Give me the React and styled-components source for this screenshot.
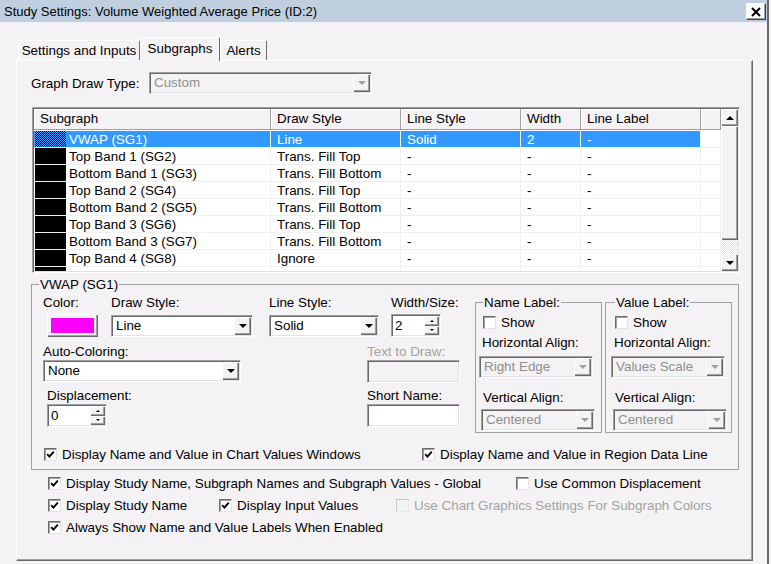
import React from 'react';
import styled, { createGlobalStyle } from 'styled-components';

const BG = '#f5f2f5';
const GRAYTEXT = '#a3a3a3';

const GlobalStyle = createGlobalStyle`
  html, body { margin: 0; padding: 0; }
  body {
    background: ${BG};
    font-family: "Liberation Sans", Arial, sans-serif;
    font-size: 13.4px;
    color: #000;
  }
  * { box-sizing: border-box; }
`;

const raised = `
  background: ${BG};
  box-shadow: inset 1px 1px #fff, inset -1px -1px #696969, inset -2px -2px #a0a0a0;
`;

const sunken = `
  border: 1px solid;
  border-color: #a0a0a0 #fff #fff #a0a0a0;
  box-shadow: inset 1px 1px #696969, inset -1px -1px #e3e3e3;
`;

const Window = styled.div`
  width: 769px;
  height: 564px;
  border-right: 2px solid #6a6a6a;
  background: ${BG};
  overflow: hidden;
  display: flex;
  flex-direction: column;
`;

const TitleBar = styled.div`
  height: 22px;
  flex-shrink: 0;
  background: #bfcfdf;
  display: flex;
  align-items: center;
  justify-content: space-between;
  padding: 0 1px 0 4px;
  font-size: 13px;
`;

const CloseBtn = styled.div`
  width: 20px;
  height: 17px;
  margin-top: 1px;
  background: #fbfbfb;
  border: 1px solid;
  border-color: #fff #404040 #404040 #fff;
  box-shadow: inset -1px -1px #a0a0a0;
  display: flex;
  align-items: center;
  justify-content: center;
`;

const Body = styled.div`
  padding: 15px 0 0 16px;
`;

const TabRow = styled.div`
  display: flex;
  align-items: flex-end;
  height: 23px;
  padding-left: 2px;
  position: relative;
  z-index: 1;
`;

const Tab = styled.div`
  width: ${p => p.$w}px;
  height: ${p => (p.$active ? 24 : 20)}px;
  margin-bottom: ${p => (p.$active ? -1 : 0)}px;
  background: ${BG};
  border: 1px solid;
  border-color: #fff #696969 transparent #fff;
  border-bottom: none;
  border-radius: 2px 2px 0 0;
  display: flex;
  align-items: center;
  justify-content: center;
  padding-bottom: ${p => (p.$active ? 2 : 0)}px;
  white-space: nowrap;
`;

const Panel = styled.div`
  width: 737px;
  height: 501px;
  border: 1px solid;
  border-color: #fff #696969 #696969 #fff;
  box-shadow: inset -1px -1px #a0a0a0;
  padding: 11px 0 0 15px;
`;

const DrawTypeRow = styled.div`
  display: flex;
  align-items: center;
  height: 22px;
`;

const DrawTypeLabel = styled.span`
  width: 118px;
  margin-left: -1px;
`;

/* ---------- generic controls ---------- */

const Arrow = styled.span`
  width: 0;
  height: 0;
  border-left: ${p => p.$s}px solid transparent;
  border-right: ${p => p.$s}px solid transparent;
  ${p => (p.$up ? 'border-bottom' : 'border-top')}: ${p => p.$s}px solid ${p => p.$c || '#000'};
`;

const ComboBox = styled.div`
  display: flex;
  height: 22px;
  width: ${p => p.$w}px;
  margin-left: ${p => p.$ml || 0}px;
  margin-top: ${p => p.$mt || 0}px;
  ${sunken}
  padding: 1px;
  background: ${p => (p.$disabled ? BG : '#fff')};
  color: ${p => (p.$disabled ? '#8f8f8f' : '#000')};
`;

const ComboText = styled.span`
  flex: 1;
  padding-left: 3px;
  line-height: 18px;
  white-space: nowrap;
  overflow: hidden;
`;

const DropBtn = styled.span`
  width: 17px;
  display: flex;
  align-items: center;
  justify-content: center;
  ${raised}
`;

const Combo = ({ value, w, ml, mt, disabled }) => (
  <ComboBox $w={w} $ml={ml} $mt={mt} $disabled={disabled}>
    <ComboText>{value}</ComboText>
    <DropBtn>
      <Arrow $s={4} $c={disabled ? '#a0a0a0' : '#000'} />
    </DropBtn>
  </ComboBox>
);

const SpinBox = styled.div`
  display: flex;
  height: 23px;
  width: ${p => p.$w}px;
  ${sunken}
  padding: 1px;
  background: #fff;
`;

const SpinText = styled.span`
  flex: 1;
  padding-left: 2px;
  line-height: 19px;
`;

const SpinBtns = styled.div`
  width: 15px;
  display: flex;
  flex-direction: column;
`;

const SpinBtn = styled.span`
  flex: 1;
  display: flex;
  align-items: center;
  justify-content: center;
  ${raised}
`;

const Spinner = ({ value, w }) => (
  <SpinBox $w={w}>
    <SpinText>{value}</SpinText>
    <SpinBtns>
      <SpinBtn><Arrow $up $s={2} /></SpinBtn>
      <SpinBtn><Arrow $s={2} /></SpinBtn>
    </SpinBtns>
  </SpinBox>
);

const EditBox = styled.div`
  height: 23px;
  width: ${p => p.$w}px;
  ${sunken}
  background: ${p => (p.$disabled ? BG : '#fff')};
`;

const CheckItem = styled.label`
  display: flex;
  align-items: center;
  gap: 5px;
  height: 16px;
  width: ${p => (p.$w ? `${p.$w}px` : 'auto')};
  margin-left: ${p => p.$ml || 0}px;
  flex-shrink: 0;
  white-space: nowrap;
  color: ${p => (p.$disabled ? GRAYTEXT : '#000')};
`;

const Box = styled.span`
  width: 13px;
  height: 13px;
  flex-shrink: 0;
  border: 1px solid;
  border-color: ${p => (p.$disabled ? '#c8c8c8 #e8e8e8 #e8e8e8 #c8c8c8' : '#6d6d6d #e3e3e3 #e3e3e3 #6d6d6d')};
  box-shadow: ${p => (p.$disabled ? 'none' : 'inset 1px 1px #a0a0a0')};
  background: ${p => (p.$disabled ? BG : '#fff')};
  display: flex;
  align-items: center;
  justify-content: center;
`;

const Check = ({ checked, disabled, children, w, ml }) => (
  <CheckItem $w={w} $ml={ml} $disabled={disabled}>
    <Box $disabled={disabled}>
      {checked && (
        <svg width="9" height="9" viewBox="0 0 9 9">
          <polyline points="1.2,4.2 3.4,6.6 7.8,1.6" fill="none" stroke="#000" strokeWidth="1.9" />
        </svg>
      )}
    </Box>
    {children}
  </CheckItem>
);

/* ---------- subgraph list ---------- */

const COLS = [237, 130, 120, 60, 120, 20];

const ListBox = styled.div`
  margin-top: 13px;
  width: 708px;
  height: 166px;
  ${sunken}
  padding: 1px;
  background: #fff;
  display: flex;
  overflow: hidden;
`;

const Grid = styled.div`
  width: 687px;
  overflow: hidden;
`;

const HeaderRow = styled.div`
  display: flex;
  height: 21px;
  margin-bottom: 1px;
`;

const HeaderCell = styled.div`
  width: ${p => p.$w}px;
  flex-shrink: 0;
  background: ${BG};
  border-right: 1px solid #a0a0a0;
  border-bottom: 1px solid #a0a0a0;
  box-shadow: inset 1px 1px #fff;
  padding-left: 6px;
  line-height: 20px;
  white-space: nowrap;
`;

const Row = styled.div`
  display: flex;
  height: 17px;
`;

const Cell = styled.div`
  width: ${p => p.$w}px;
  flex-shrink: 0;
  height: 17px;
  display: flex;
  align-items: center;
  border-right: 1px solid #f0f0f0;
  border-bottom: 1px solid #f0f0f0;
  padding-left: ${p => (p.$first ? 1 : 6)}px;
  background: ${p => (p.$sel ? '#3399ff' : '#fff')};
  color: ${p => (p.$sel ? '#fff' : '#000')};
  white-space: nowrap;
  overflow: hidden;
`;

const Swatch = styled.span`
  width: 31px;
  height: 16px;
  margin-right: 3px;
  flex-shrink: 0;
  background: ${p =>
    p.$sel ? 'repeating-conic-gradient(#000 0 25%, #3399ff 0 50%) 0 0 / 2px 2px' : '#000'};
`;

const ScrollBar = styled.div`
  width: 17px;
  display: flex;
  flex-direction: column;
`;

const ScrollBtn = styled.div`
  height: 17px;
  display: flex;
  align-items: center;
  justify-content: center;
  ${raised}
`;

const Thumb = styled.div`
  height: 114px;
  ${raised}
`;

const Track = styled.div`
  flex: 1;
  background: repeating-conic-gradient(#ffffff 0 25%, #e6e4e6 0 50%) 0 0 / 2px 2px;
`;

const rows = [
  ['VWAP (SG1)', 'Line', 'Solid', '2', '-'],
  ['Top Band 1 (SG2)', 'Trans. Fill Top', '-', '-', '-'],
  ['Bottom Band 1 (SG3)', 'Trans. Fill Bottom', '-', '-', '-'],
  ['Top Band 2 (SG4)', 'Trans. Fill Top', '-', '-', '-'],
  ['Bottom Band 2 (SG5)', 'Trans. Fill Bottom', '-', '-', '-'],
  ['Top Band 3 (SG6)', 'Trans. Fill Top', '-', '-', '-'],
  ['Bottom Band 3 (SG7)', 'Trans. Fill Bottom', '-', '-', '-'],
  ['Top Band 4 (SG8)', 'Ignore', '-', '-', '-'],
  ['Bottom Band 4 (SG9)', 'Ignore', '-', '-', '-'],
];

/* ---------- group boxes ---------- */

const Group = styled.fieldset`
  margin: ${p => p.$mt || 0}px 0 0 ${p => p.$ml || 0}px;
  width: ${p => p.$w}px;
  min-inline-size: 0;
  border: 1px solid #a0a0a0;
  padding: 0 0 ${p => p.$pb || 0}px ${p => p.$pl || 0}px;
`;

const Legend = styled.legend`
  padding: 0 1px;
  margin-left: ${p => p.$ml || 0}px;
  line-height: 15px;
`;

const TopArea = styled.div`
  display: flex;
  align-items: flex-start;
  margin-top: 3px;
`;

const LeftArea = styled.div`
  width: 417px;
  flex-shrink: 0;
`;

const FieldRow = styled.div`
  display: flex;
  margin-top: ${p => p.$mt || 0}px;
`;

const Field = styled.div`
  display: flex;
  flex-direction: column;
  width: ${p => p.$w}px;
  margin-left: ${p => p.$ml || 0}px;
  flex-shrink: 0;
`;

const FieldLabel = styled.span`
  line-height: 15px;
  height: 15px;
  margin-bottom: ${p => p.$gap}px;
  margin-left: ${p => p.$ml || 0}px;
  white-space: nowrap;
  color: ${p => (p.$disabled ? GRAYTEXT : '#000')};
`;

const ColorBtn = styled.div`
  width: 51px;
  height: 23px;
  margin: -1px 0 0 4px;
  padding: 4px;
  ${raised}
`;

const ColorFill = styled.div`
  height: 100%;
  background: #ff00ff;
`;

const LabelGroupBody = styled.div`
  display: flex;
  flex-direction: column;
  align-items: flex-start;
  padding-left: ${p => p.$pl}px;
`;

const SubLabel = styled.span`
  line-height: 15px;
  margin-top: ${p => p.$mt}px;
  margin-left: ${p => p.$ml || 0}px;
  white-space: nowrap;
`;

const CheckLine = styled.div`
  display: flex;
  align-items: center;
  margin-top: ${p => p.$mt || 0}px;
  margin-left: ${p => p.$ml || 0}px;
`;

const LabelGroup = ({ title, ml, pl, hAlign }) => (
  <Group $w={127} $ml={ml} $pb={1}>
    <Legend $ml={pl}>{title}</Legend>
    <LabelGroupBody $pl={pl}>
      <CheckLine $mt={4}>
        <Check>Show</Check>
      </CheckLine>
      <SubLabel $mt={5} $ml={-1}>Horizontal Align:</SubLabel>
      <Combo value={hAlign} w={114} ml={-4} mt={6} disabled />
      <SubLabel $mt={12} $ml={0}>Vertical Align:</SubLabel>
      <Combo value="Centered" w={114} ml={-2} mt={4} disabled />
    </LabelGroupBody>
  </Group>
);

const App = () => (
  <>
    <GlobalStyle />
    <Window>
      <TitleBar>
        <span>Study Settings: Volume Weighted Average Price (ID:2)</span>
        <CloseBtn>
          <svg width="10" height="10" viewBox="0 0 10 10">
            <path d="M1 1 L9 9 M9 1 L1 9" stroke="#000" strokeWidth="2" />
          </svg>
        </CloseBtn>
      </TitleBar>

      <Body>
        <TabRow>
          <Tab $w={122}>Settings and Inputs</Tab>
          <Tab $w={80} $active>Subgraphs</Tab>
          <Tab $w={47}>Alerts</Tab>
        </TabRow>

        <Panel>
          <DrawTypeRow>
            <DrawTypeLabel>Graph Draw Type:</DrawTypeLabel>
            <Combo value="Custom" w={223} disabled />
          </DrawTypeRow>

          <ListBox>
            <Grid>
              <HeaderRow>
                {['Subgraph', 'Draw Style', 'Line Style', 'Width', 'Line Label', ''].map((h, i) => (
                  <HeaderCell key={i} $w={COLS[i]}>{h}</HeaderCell>
                ))}
              </HeaderRow>
              {rows.map((r, ri) => (
                <Row key={ri}>
                  <Cell $w={COLS[0]} $first $sel={ri === 0}>
                    <Swatch $sel={ri === 0} />
                    {r[0]}
                  </Cell>
                  {r.slice(1).map((c, ci) => (
                    <Cell key={ci} $w={COLS[ci + 1]} $sel={ri === 0}>{c}</Cell>
                  ))}
                  <Cell $w={COLS[5]} />
                </Row>
              ))}
            </Grid>
            <ScrollBar>
              <ScrollBtn><Arrow $up $s={4} /></ScrollBtn>
              <Thumb />
              <Track />
              <ScrollBtn><Arrow $s={4} /></ScrollBtn>
            </ScrollBar>
          </ListBox>

          <Group $w={708} $mt={4} $ml={-1} $pl={11} $pb={7}>
            <Legend $ml={-4}>VWAP (SG1)</Legend>
            <TopArea>
              <LeftArea>
                <FieldRow>
                  <Field $w={55}>
                    <FieldLabel $gap={5}>Color:</FieldLabel>
                    <ColorBtn><ColorFill /></ColorBtn>
                  </Field>
                  <Field $w={142} $ml={13}>
                    <FieldLabel $gap={5}>Draw Style:</FieldLabel>
                    <Combo value="Line" w={142} />
                  </Field>
                  <Field $w={110} $ml={16}>
                    <FieldLabel $gap={5}>Line Style:</FieldLabel>
                    <Combo value="Solid" w={110} />
                  </Field>
                  <Field $w={50} $ml={12}>
                    <FieldLabel $gap={4}>Width/Size:</FieldLabel>
                    <Spinner value="2" w={50} />
                  </Field>
                </FieldRow>
                <FieldRow $mt={7}>
                  <Field $w={198}>
                    <FieldLabel $gap={1}>Auto-Coloring:</FieldLabel>
                    <Combo value="None" w={198} />
                  </Field>
                  <Field $w={93} $ml={126}>
                    <FieldLabel $gap={1} $disabled>Text to Draw:</FieldLabel>
                    <EditBox $w={93} $disabled />
                  </Field>
                </FieldRow>
                <FieldRow $mt={5}>
                  <Field $w={60} $ml={4}>
                    <FieldLabel $gap={1}>Displacement:</FieldLabel>
                    <Spinner value="0" w={60} />
                  </Field>
                  <Field $w={93} $ml={260}>
                    <FieldLabel $gap={1}>Short Name:</FieldLabel>
                    <EditBox $w={93} />
                  </Field>
                </FieldRow>
              </LeftArea>
              <LabelGroup title="Name Label:" ml={15} pl={7} hAlign="Right Edge" />
              <LabelGroup title="Value Label:" ml={3} pl={9} hAlign="Values Scale" />
            </TopArea>
            <CheckLine $mt={13} $ml={1}>
              <Check checked w={378}>Display Name and Value in Chart Values Windows</Check>
              <Check checked>Display Name and Value in Region Data Line</Check>
            </CheckLine>
          </Group>

          <CheckLine $mt={5} $ml={16}>
            <Check checked w={468}>Display Study Name, Subgraph Names and Subgraph Values - Global</Check>
            <Check>Use Common Displacement</Check>
          </CheckLine>
          <CheckLine $mt={6} $ml={16}>
            <Check checked w={171}>Display Study Name</Check>
            <Check checked w={177}>Display Input Values</Check>
            <Check disabled>Use Chart Graphics Settings For Subgraph Colors</Check>
          </CheckLine>
          <CheckLine $mt={6} $ml={16}>
            <Check checked>Always Show Name and Value Labels When Enabled</Check>
          </CheckLine>
        </Panel>
      </Body>
    </Window>
  </>
);

export default App;
